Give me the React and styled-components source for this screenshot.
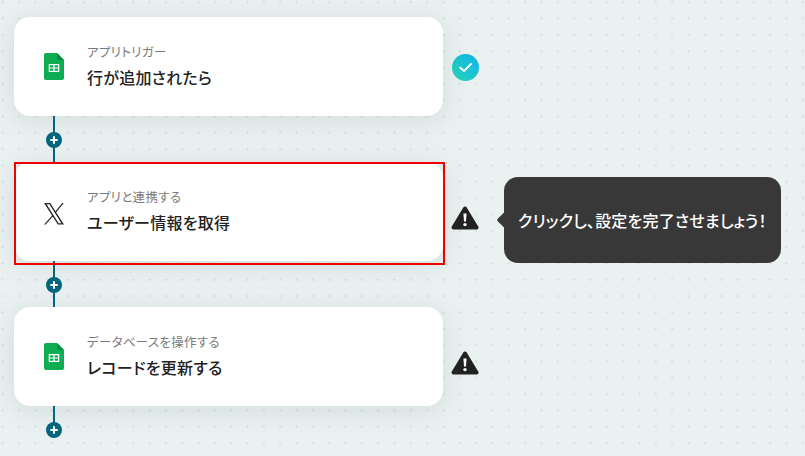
import React from "react";
import styled, { createGlobalStyle } from "styled-components";

const Global = createGlobalStyle`
	html, body {
		margin: 0;
		padding: 0;
	}
	body {
		font-family: "Noto Sans CJK JP", "Noto Sans", sans-serif;
		font-feature-settings: "palt";
	}
`;

const Canvas = styled.div`
	width: 805px;
	height: 456px;
	overflow: hidden;
	box-sizing: border-box;
	padding: 17px 0 0 14px;
	background-color: #eaf2f1;
	background-image: radial-gradient(circle, #d9e0df 1px, transparent 1.2px);
	background-size: 16.33px 16.33px;
	background-position: -5.5px -6px;
`;

const StepRow = styled.div`
	display: flex;
	align-items: center;
	height: 99px;
`;

const Card = styled.div`
	position: relative;
	box-sizing: border-box;
	width: 429px;
	height: 99px;
	padding-left: 28px;
	display: flex;
	align-items: center;
	background: #fff;
	border-radius: 16px;
	box-shadow: 0 4px 28px rgba(60, 90, 90, 0.14);
`;

const Highlight = styled.div`
	position: absolute;
	top: 0;
	left: 0;
	width: 431px;
	height: 103px;
	box-sizing: border-box;
	border: 2px solid #f00000;
	pointer-events: none;
`;

const IconSlot = styled.div`
	width: 24px;
	height: 32px;
	margin-right: 21px;
	display: flex;
	align-items: center;
	justify-content: center;
`;

const Texts = styled.div`
	display: flex;
	flex-direction: column;
	margin-bottom: 3px;
`;

const Label = styled.div`
	font-size: 12.5px;
	letter-spacing: 0.3px;
	line-height: 18px;
	color: #7a7a7a;
`;

const Title = styled.div`
	margin-top: 5px;
	font-size: 16px;
	letter-spacing: 0.25px;
	line-height: 22px;
	font-weight: 500;
	color: #222;
`;

const Status = styled.div`
	margin-left: 8px;
	margin-top: ${({ warn }) => (warn ? "12px" : "1px")};
	width: 28px;
	height: 28px;
	display: flex;
	align-items: center;
	justify-content: center;
`;

const Tooltip = styled.div`
	position: relative;
	box-sizing: border-box;
	margin-left: 25px;
	margin-top: 17px;
	width: 277px;
	height: 86px;
	padding-left: 14px;
	display: flex;
	align-items: center;
	background: #383838;
	border-radius: 14px;
	font-size: 16px;
	letter-spacing: 0.2px;
	font-weight: 500;
	color: #fff;
	white-space: nowrap;
	&::before {
		content: "";
		position: absolute;
		left: -5px;
		top: 37px;
		width: 12px;
		height: 12px;
		background: #383838;
		transform: rotate(45deg);
		border-radius: 2px;
	}
`;

const Connector = styled.div`
	box-sizing: border-box;
	width: 80px;
	height: 46px;
	padding-top: 2px;
	display: flex;
	align-items: center;
	justify-content: center;
	background: linear-gradient(#06657f, #06657f) center / 2px 100% no-repeat;
`;

const AddButton = styled.div`
	width: 16px;
	height: 16px;
	border-radius: 50%;
	background: #06657f;
	display: flex;
	align-items: center;
	justify-content: center;
`;

const TailLine = styled(Connector)`
	height: 32px;
	align-items: flex-end;
	background-size: 2px 20px;
	background-position: top center;
`;

const SheetIcon = () => (
	<svg width="20" height="27" viewBox="0 0 20 27">
		<path d="M2 0H13L20 7V25a2 2 0 0 1-2 2H2a2 2 0 0 1-2-2V2a2 2 0 0 1 2-2Z" fill="#0ead53" />
		<path d="M13 0L20 7H15a2 2 0 0 1-2-2Z" fill="#0a8a42" />
		<path d="M4.7 11H15.3V19H4.7Z M6 12.3V14.4H9.4V12.3Z M10.6 12.3V14.4H14V12.3Z M6 15.6V17.7H9.4V15.6Z M10.6 15.6V17.7H14V15.6Z" fill="#fff" fillRule="evenodd" />
	</svg>
);

const XIcon = () => (
	<svg width="22" height="26" viewBox="0 -4 22 26">
		<path d="M1 0H7.2L21 21.6H14.8Z M3.6 1.3L15.6 20.3H18.4L6.4 1.3Z" fill="#2a2a2a" fillRule="evenodd" />
		<path d="M19.2 0H20.8L12.6 10L11.8 9Z M9.6 12L10.4 13.1L2.6 21.6H1Z" fill="#2a2a2a" />
	</svg>
);

const CheckIcon = () => (
	<svg width="27" height="27" viewBox="0 0 27 27">
		<defs>
			<linearGradient id="okGrad" x1="0" y1="1" x2="1" y2="0">
				<stop offset="0" stopColor="#2bd8b4" />
				<stop offset="1" stopColor="#0cb2ee" />
			</linearGradient>
		</defs>
		<circle cx="13.5" cy="13.5" r="13.5" fill="url(#okGrad)" />
		<path d="M8 13.5L12 17L19 10" fill="none" stroke="#fff" strokeWidth="1.8" strokeLinecap="round" strokeLinejoin="round" />
	</svg>
);

const WarnIcon = () => (
	<svg width="28" height="24" viewBox="0 0 28 24">
		<path d="M14 2.5L25.5 21.5H2.5Z" fill="#222" stroke="#222" strokeWidth="4" strokeLinejoin="round" />
		<path d="M12.4 7.5h3.2L15 15.5h-2Z" fill="#fff" />
		<circle cx="14" cy="18.6" r="1.7" fill="#fff" />
	</svg>
);

const PlusIcon = () => (
	<svg width="8" height="8" viewBox="0 0 8 8">
		<path d="M4 1V7M1 4H7" stroke="#fff" strokeWidth="2" strokeLinecap="round" />
	</svg>
);

const Step = ({ icon, label, title, status, warn, highlighted, children }) => (
	<StepRow>
		<Card>
			<IconSlot>{icon}</IconSlot>
			<Texts>
				<Label>{label}</Label>
				<Title>{title}</Title>
			</Texts>
			{highlighted ? <Highlight /> : null}
		</Card>
		<Status warn={warn}>{status}</Status>
		{children}
	</StepRow>
);

const Add = ({ as }) => (
	<Connector as={as}>
		<AddButton>
			<PlusIcon />
		</AddButton>
	</Connector>
);

export default function App() {
	return (
		<Canvas>
			<Global />
			<Step icon={<SheetIcon />} label="アプリトリガー" title="行が追加されたら" status={<CheckIcon />} />
			<Add />
			<Step icon={<XIcon />} label="アプリと連携する" title="ユーザー情報を取得" status={<WarnIcon />} warn highlighted>
				<Tooltip>クリックし、設定を完了させましょう！</Tooltip>
			</Step>
			<Add />
			<Step icon={<SheetIcon />} label="データベースを操作する" title="レコードを更新する" status={<WarnIcon />} warn />
			<Add as={TailLine} />
		</Canvas>
	);
}
